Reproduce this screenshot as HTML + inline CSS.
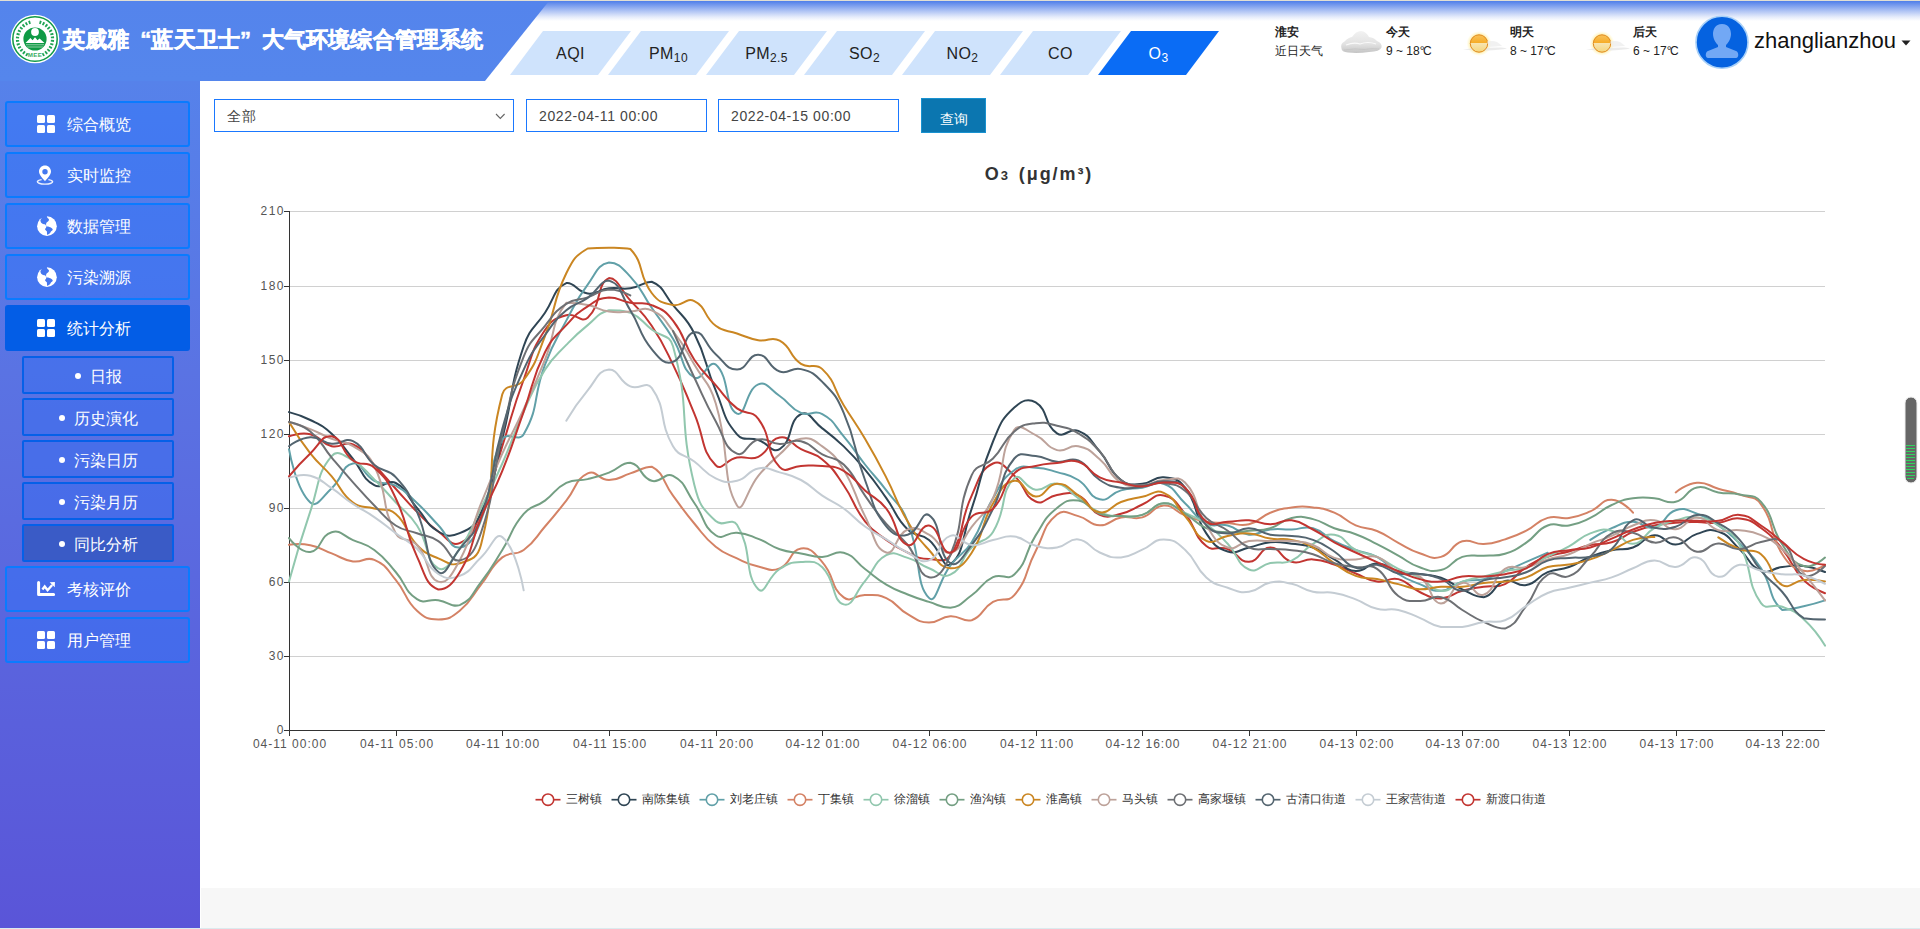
<!DOCTYPE html>
<html><head><meta charset="utf-8">
<style>
*{box-sizing:border-box;margin:0;padding:0}
html,body{width:1920px;height:929px;overflow:hidden;background:#fff;font-family:"Liberation Sans",sans-serif}
.abs{position:absolute}
#topline{left:0;top:0;width:1920px;height:1px;background:#e2dfd3}
#hdrgrad{left:0;top:1px;width:1920px;height:20px;background:linear-gradient(180deg,#4f7ee9 0%,#9db6f2 40%,#e6ecfb 80%,#fff 100%)}
#side{left:0;top:1px;width:200px;height:927px;background:linear-gradient(180deg,#5586ec 0%,#5a73e3 40%,#5a55d8 100%)}
#hdrpoly{left:0;top:1px;width:560px;height:80px}
.q{display:inline-block;width:22px}
#title{-webkit-text-stroke:0.5px #fff;left:63px;top:27px;width:420px;text-align:justify;text-align-last:justify;font-size:22px;font-weight:bold;color:#fff;white-space:nowrap;line-height:26px;letter-spacing:0}
.mi{position:absolute;left:5px;width:185px;height:46px;border:2px solid #0a7bff;border-radius:3px;background:rgba(45,115,250,0.45);color:#fff;font-size:16px;line-height:42px}
.mi span{position:absolute;left:60px;top:1px;width:64px;text-align:justify;text-align-last:justify;white-space:nowrap}
.mi.act{background:#035de6;border-color:#035de6}
.si{position:absolute;left:22px;width:152px;height:38px;border:2px solid #0560e8;border-radius:2px;background:rgba(45,110,245,0.4);color:#fff;font-size:16px;line-height:37px;text-align:center}
.si i{display:inline-block;width:6px;height:6px;border-radius:3px;background:#fff;vertical-align:middle;margin-right:9px;position:relative;top:-2px}
.si.act{background:#3a5bc6}
.jt{display:inline-block;text-align:justify;text-align-last:justify;white-space:nowrap;vertical-align:top}
.ico{position:absolute;left:30px;top:12px;width:18px;height:18px}
#content{left:200px;top:81px;width:1720px;height:847px;background:#fff}
#gray{left:201px;top:888px;width:1719px;height:40px;background:#f7f7f7}
#botline{left:0;top:928px;width:1920px;height:1px;background:#dbeaee}
.tab{position:absolute;top:31px;height:44px;width:121px}
.tabt{position:absolute;top:32px;letter-spacing:0.4px;height:44px;width:121px;text-align:center;line-height:44px;font-size:16px;color:#222}
.tabt sub{font-size:12px;vertical-align:-3px;line-height:0}
.inp{position:absolute;top:99px;height:33px;border:1px solid #1a78ff;background:#fff;font-size:14px;color:#444;line-height:32px;padding-left:12px;letter-spacing:0.6px}
#btn{left:921px;top:98px;width:65px;height:35px;background:#0b76b0;border:1px solid #1992d0;color:#fff;font-size:14px;line-height:40px;text-align:center}
#ctitle{left:902px;top:162px;width:274px;letter-spacing:1.9px;text-align:center;font-size:18px;font-weight:bold;color:#333;line-height:24px}
svg text{font-family:"Liberation Sans",sans-serif}
.wt{position:absolute;font-size:12px;color:#222;line-height:14px;white-space:nowrap}
.wt b{position:relative;top:1px}
.wt b{font-weight:bold}
</style></head><body>
<div class="abs" id="topline"></div>
<div class="abs" id="hdrgrad"></div>
<div class="abs" id="side"></div>
<svg class="abs" id="hdrpoly" width="560" height="80" style="left:0;top:1px">
<defs><linearGradient id="hg" x1="0" y1="0" x2="0" y2="1"><stop offset="0" stop-color="#5484ec"/><stop offset="1" stop-color="#5586ec"/></linearGradient></defs>
<polygon points="0,0 549,0 485,80 0,80" fill="url(#hg)"/>
</svg>
<div class="abs" id="content"></div>
<div class="abs" id="gray"></div>
<div class="abs" id="botline"></div>

<!-- logo -->
<svg class="abs" style="left:10px;top:14px" width="50" height="50" viewBox="0 0 50 50">
<circle cx="25" cy="25" r="24.3" fill="#fff"/>
<circle cx="25" cy="25" r="22.2" fill="none" stroke="#109a46" stroke-width="1.5"/>
<path d="M17.6 40.9 A17.5 17.5 0 0 1 20.5 8.1 M29.5 8.1 A17.5 17.5 0 0 1 32.4 40.9" fill="none" stroke="#1fa454" stroke-width="3.2" stroke-dasharray="1.8 1.6"/>
<circle cx="25" cy="25" r="11.6" fill="#0f9a45"/>
<circle cx="25" cy="18" r="3.9" fill="#fff"/>
<polygon points="15.5,29 20.4,24 22.6,26.3 25,23.3 27.5,26.3 29.6,24.5 34.5,29" fill="#fff"/>
<path d="M16 30.8 H34 M17 33 H33" stroke="#8fd0a6" stroke-width="1.1"/>
<text x="25" y="42.6" font-size="6.2" font-weight="bold" fill="#3aae63" text-anchor="middle" font-family="Liberation Sans" letter-spacing="0.3">MEE</text>
</svg>
<div class="abs" id="title">英威雅<span class="q" style="text-align:right;text-align-last:right">“</span>蓝天卫士<span class="q" style="text-align:left;text-align-last:left">”</span>大气环境综合管理系统</div>

<!-- tabs -->
<svg class="abs" style="left:500px;top:31px" width="740" height="44">
<g fill="#cfe3fc">
<polygon points="10,44 43,0 131,0 98,44"/>
<polygon points="108,44 141,0 229,0 196,44"/>
<polygon points="206,44 239,0 327,0 294,44"/>
<polygon points="304,44 337,0 425,0 392,44"/>
<polygon points="402,44 435,0 523,0 490,44"/>
<polygon points="500,44 533,0 621,0 588,44"/>
</g>
<polygon points="598,44 631,0 719,0 686,44" fill="#0a6cf5"/>
</svg>
<div class="tabt" style="left:510px">AQI</div>
<div class="tabt" style="left:608px">PM<sub>10</sub></div>
<div class="tabt" style="left:706px">PM<sub>2.5</sub></div>
<div class="tabt" style="left:804px">SO<sub>2</sub></div>
<div class="tabt" style="left:902px">NO<sub>2</sub></div>
<div class="tabt" style="left:1000px">CO</div>
<div class="tabt" style="left:1098px;color:#fff">O<sub>3</sub></div>

<!-- weather -->
<div class="wt" style="left:1275px;top:24px"><b><span class="jt" style="width:24px">淮安</span></b></div>
<div class="wt" style="left:1275px;top:44px"><span class="jt" style="width:48px">近日天气</span></div>
<svg class="abs" style="left:1338px;top:28px" width="46" height="28" viewBox="0 0 46 28">
<defs><linearGradient id="cl" x1="0" y1="0" x2="0" y2="1"><stop offset="0" stop-color="#f2f2f2"/><stop offset="0.6" stop-color="#e2e2e2"/><stop offset="1" stop-color="#c4c4c4"/></linearGradient></defs>
<path d="M3.5 20.5 Q2 15.5 6.5 13.5 Q10 9.5 14 9 Q18 3 23 3 Q28 3.5 31 9 Q36 9.5 39 13 Q44.5 15 43.5 19.5 Q42 23.5 31 24 Q20 25.5 10 24.5 Q3.5 24 3.5 20.5Z" fill="url(#cl)"/><path d="M8 17 Q16 14 22 16 Q30 13 38 16" stroke="#fff" stroke-width="1.2" fill="none" opacity="0.8"/><path d="M6 22 Q18 20 26 21.5 Q34 20 41 21" stroke="#c0c0c0" stroke-width="1" fill="none" opacity="0.6"/>
</svg>
<div class="wt" style="left:1386px;top:24px"><b><span class="jt" style="width:24px">今天</span></b></div>
<div class="wt" style="left:1386px;top:44px">9 ~ 18<span style="letter-spacing:-1.5px">°</span>C</div>
<svg class="abs" style="left:1455px;top:25px" width="56" height="36" viewBox="0 0 56 36"><defs><radialGradient id="glow"><stop offset="0.6" stop-color="#ffd84a" stop-opacity="0.7"/><stop offset="1" stop-color="#fff3a0" stop-opacity="0"/></radialGradient><linearGradient id="sunf" x1="0" y1="0" x2="0" y2="1"><stop offset="0" stop-color="#f9c25a"/><stop offset="0.45" stop-color="#f6ad2a"/><stop offset="0.5" stop-color="#f7e4b0"/><stop offset="1" stop-color="#f5d67a"/></linearGradient></defs><circle cx="24" cy="18.5" r="12.5" fill="url(#glow)"/><path d="M8 24.5 Q14 23.5 20 23 L46 22.5 Q51 23 52 23.8 Q44 25 34 25.5 Q22 26 8 24.5Z" fill="#e6e6e6" opacity="0.8"/><circle cx="24" cy="18.5" r="8.7" fill="url(#sunf)" stroke="#e08a20" stroke-width="1"/><path d="M32 16.5 Q38 15.5 42 17 Q45 19 47 21 L34 22Z" fill="#eeeeee" opacity="0.8"/></svg>
<div class="wt" style="left:1510px;top:24px"><b><span class="jt" style="width:24px">明天</span></b></div>
<div class="wt" style="left:1510px;top:44px">8 ~ 17<span style="letter-spacing:-1.5px">°</span>C</div>
<svg class="abs" style="left:1578px;top:25px" width="56" height="36" viewBox="0 0 56 36"><circle cx="24" cy="18.5" r="12.5" fill="url(#glow)"/><path d="M8 24.5 Q14 23.5 20 23 L46 22.5 Q51 23 52 23.8 Q44 25 34 25.5 Q22 26 8 24.5Z" fill="#e6e6e6" opacity="0.8"/><circle cx="24" cy="18.5" r="8.7" fill="url(#sunf)" stroke="#e08a20" stroke-width="1"/><path d="M32 16.5 Q38 15.5 42 17 Q45 19 47 21 L34 22Z" fill="#eeeeee" opacity="0.8"/></svg>
<div class="wt" style="left:1633px;top:24px"><b><span class="jt" style="width:24px">后天</span></b></div>
<div class="wt" style="left:1633px;top:44px">6 ~ 17<span style="letter-spacing:-1.5px">°</span>C</div>

<!-- avatar -->
<svg class="abs" style="left:1694px;top:15px" width="56" height="56" viewBox="0 0 56 56">
<circle cx="28" cy="27.3" r="26" fill="#0562e0" stroke="#a8d0f8" stroke-width="1.6"/>
<path d="M28 9 C21 9 19 15 19 19 C19 24 22 28 24 30 L24 32 L14 36 C11 37 11 43 14 43 L42 43 C45 43 45 37 42 36 L32 32 L32 30 C34 28 37 24 37 19 C37 15 35 9 28 9Z" fill="#72a8f5"/>
</svg>
<div class="abs" style="left:1754px;top:28px;font-size:22px;color:#111;line-height:26px">zhanglianzhou</div>
<svg class="abs" style="left:1901px;top:40px" width="10" height="6"><polygon points="0.5,0.5 9.5,0.5 5,5.5" fill="#222"/></svg>

<!-- sidebar menu -->
<div class="mi" style="top:101px"><svg class="ico" viewBox="0 0 18 18"><rect x="0" y="0" width="8" height="8" rx="1.5" fill="#fff"/><rect x="10" y="0" width="8" height="8" rx="1.5" fill="#fff"/><rect x="0" y="10" width="8" height="8" rx="1.5" fill="#fff"/><rect x="10" y="10" width="8" height="8" rx="1.5" fill="#fff"/></svg><span>综合概览</span></div>
<div class="mi" style="top:152px"><svg class="ico" viewBox="0 0 18 18" style="overflow:visible"><path d="M8 -0.5 C4.6 -0.5 2 2.2 2 5.6 C2 9.2 5.6 12.3 8 15.2 C10.4 12.3 14 9.2 14 5.6 C14 2.2 11.4 -0.5 8 -0.5Z M8 3.1 A2.7 2.7 0 1 0 8 8.5 A2.7 2.7 0 1 0 8 3.1Z" fill="#fff" fill-rule="evenodd"/><path d="M4.6 13.6 A7.6 2.4 0 1 0 11.4 13.6" fill="none" stroke="#fff" stroke-width="1.4" opacity="0.9"/></svg><span>实时监控</span></div>
<div class="mi" style="top:203px"><svg class="ico" style="left:30px;top:11px;width:20px;height:20px" viewBox="0 0 20 20"><defs><mask id="gm" maskUnits="userSpaceOnUse" x="-2" y="-2" width="24" height="24"><rect x="-2" y="-2" width="24" height="24" fill="#fff"/><path fill="#000" d="M4.53 2.17 C3.6 3.2 3.3 4.1 3.48 4.73 C3.6 5.8 3.9 6.5 4.23 6.84 C4.9 7.5 5.4 7.8 6.04 7.9 C6.8 8 7.4 8.1 7.84 8.35 C8.4 8.7 8.7 9.2 8.9 9.55 L9.35 10.16 L9.05 8.65 C9.1 7.6 9.3 7 9.65 6.54 C10.3 5.8 11 5.5 11.46 5.04 C11.9 4.5 12 3.8 11.9 3.23 C11.6 2.6 11 2.3 10.55 2.02 L9.95 0.82 L10 -2 L2 -2 Z M9.35 10.16 C10 10.3 10.6 10.3 11.16 10.46 C12 10.7 12.7 11 13.27 11.36 C14.3 12 15 12.4 15.37 12.87 C15.7 13.3 15.8 13.7 15.67 14.07 C15.3 14.6 14.6 14.9 14.17 15.28 C13.8 15.7 13.5 16.3 13.27 16.78 C12.6 17.5 12 18 11.46 18.29 L10.25 18.89 C10 18.2 10 17.6 9.95 17.08 L9.95 15.58 C9.5 14.9 8.9 14.5 8.45 14.07 C8.1 13.6 8.1 13.2 8.14 12.87 C8.5 12.4 8.8 12 9.05 11.66 Z"/></mask></defs><circle cx="9.95" cy="10.15" r="9.85" fill="#fff" mask="url(#gm)"/></svg><span>数据管理</span></div>
<div class="mi" style="top:254px"><svg class="ico" style="left:30px;top:11px;width:20px;height:20px" viewBox="0 0 20 20"><circle cx="9.95" cy="10.15" r="9.85" fill="#fff" mask="url(#gm)"/></svg><span>污染溯源</span></div>
<div class="mi act" style="top:305px"><svg class="ico" viewBox="0 0 18 18"><rect x="0" y="0" width="8" height="8" rx="1.5" fill="#fff"/><rect x="10" y="0" width="8" height="8" rx="1.5" fill="#fff"/><rect x="0" y="10" width="8" height="8" rx="1.5" fill="#fff"/><rect x="10" y="10" width="8" height="8" rx="1.5" fill="#fff"/></svg><span>统计分析</span></div>
<div class="si" style="top:356px"><i></i><span class="jt" style="width:32px">日报</span></div>
<div class="si" style="top:398px"><i></i><span class="jt" style="width:64px">历史演化</span></div>
<div class="si" style="top:440px"><i></i><span class="jt" style="width:64px">污染日历</span></div>
<div class="si" style="top:482px"><i></i><span class="jt" style="width:64px">污染月历</span></div>
<div class="si act" style="top:524px"><i></i><span class="jt" style="width:64px">同比分析</span></div>
<div class="mi" style="top:566px"><svg class="ico" viewBox="0 0 18 18" style="overflow:visible"><path d="M1.6 2.6 V14.6 H16.6" stroke="#fff" stroke-width="3" fill="none" stroke-linecap="round" stroke-linejoin="round"/><path d="M5.4 9.4 L7.7 6.4 L10.6 10.2 L15.2 5" stroke="#fff" stroke-width="2.4" fill="none" stroke-linejoin="miter"/><path d="M12.6 2.2 L17.9 2.1 L17.8 7.3Z" fill="#fff"/></svg><span>考核评价</span></div>
<div class="mi" style="top:617px"><svg class="ico" viewBox="0 0 18 18"><rect x="0" y="0" width="8" height="8" rx="1.5" fill="#fff"/><rect x="10" y="0" width="8" height="8" rx="1.5" fill="#fff"/><rect x="0" y="10" width="8" height="8" rx="1.5" fill="#fff"/><rect x="10" y="10" width="8" height="8" rx="1.5" fill="#fff"/></svg><span>用户管理</span></div>

<!-- filter -->
<div class="inp" style="left:214px;width:300px"><span class="jt" style="width:28px">全部</span><svg style="position:absolute;right:7px;top:13px" width="11" height="7"><polyline points="1,1 5.3,5.5 9.6,1" fill="none" stroke="#666" stroke-width="1.1"/></svg></div>
<div class="inp" style="left:526px;width:181px">2022-04-11 00:00</div>
<div class="inp" style="left:718px;width:181px">2022-04-15 00:00</div>
<div class="abs" id="btn"><span class="jt" style="width:28px">查询</span></div>
<div class="abs" id="ctitle">O<span style="font-size:13px">3</span><span style="margin-left:9px">(</span>μg/m³)</div>

<svg width="1920" height="929" style="position:absolute;left:0;top:0">
<line x1="289" x2="1825" y1="211.5" y2="211.5" stroke="#d0d0d0" stroke-width="1"/>
<line x1="289" x2="1825" y1="286.5" y2="286.5" stroke="#d0d0d0" stroke-width="1"/>
<line x1="289" x2="1825" y1="360.5" y2="360.5" stroke="#d0d0d0" stroke-width="1"/>
<line x1="289" x2="1825" y1="434.5" y2="434.5" stroke="#d0d0d0" stroke-width="1"/>
<line x1="289" x2="1825" y1="508.5" y2="508.5" stroke="#d0d0d0" stroke-width="1"/>
<line x1="289" x2="1825" y1="582.5" y2="582.5" stroke="#d0d0d0" stroke-width="1"/>
<line x1="289" x2="1825" y1="656.5" y2="656.5" stroke="#d0d0d0" stroke-width="1"/>
<line x1="289.5" x2="289.5" y1="211" y2="731" stroke="#333" stroke-width="1"/>
<line x1="284" x2="289" y1="730.5" y2="730.5" stroke="#333"/>
<text x="285" y="733.5" text-anchor="end" font-size="12" fill="#555" letter-spacing="1.5">0</text>
<line x1="284" x2="289" y1="656.5" y2="656.5" stroke="#333"/>
<text x="285" y="659.5" text-anchor="end" font-size="12" fill="#555" letter-spacing="1.5">30</text>
<line x1="284" x2="289" y1="582.5" y2="582.5" stroke="#333"/>
<text x="285" y="585.5" text-anchor="end" font-size="12" fill="#555" letter-spacing="1.5">60</text>
<line x1="284" x2="289" y1="508.5" y2="508.5" stroke="#333"/>
<text x="285" y="511.5" text-anchor="end" font-size="12" fill="#555" letter-spacing="1.5">90</text>
<line x1="284" x2="289" y1="434.5" y2="434.5" stroke="#333"/>
<text x="285" y="437.5" text-anchor="end" font-size="12" fill="#555" letter-spacing="1.5">120</text>
<line x1="284" x2="289" y1="360.5" y2="360.5" stroke="#333"/>
<text x="285" y="363.5" text-anchor="end" font-size="12" fill="#555" letter-spacing="1.5">150</text>
<line x1="284" x2="289" y1="286.5" y2="286.5" stroke="#333"/>
<text x="285" y="289.5" text-anchor="end" font-size="12" fill="#555" letter-spacing="1.5">180</text>
<line x1="284" x2="289" y1="211.5" y2="211.5" stroke="#333"/>
<text x="285" y="214.5" text-anchor="end" font-size="12" fill="#555" letter-spacing="1.5">210</text>
<line x1="284" x2="1825" y1="730.5" y2="730.5" stroke="#333" stroke-width="1"/>
<line x1="289.5" x2="289.5" y1="731" y2="736" stroke="#333"/>
<text x="290.0" y="748" text-anchor="middle" font-size="12" fill="#555" letter-spacing="1">04-11 00:00</text>
<line x1="396.5" x2="396.5" y1="731" y2="736" stroke="#333"/>
<text x="397.0" y="748" text-anchor="middle" font-size="12" fill="#555" letter-spacing="1">04-11 05:00</text>
<line x1="502.5" x2="502.5" y1="731" y2="736" stroke="#333"/>
<text x="503.0" y="748" text-anchor="middle" font-size="12" fill="#555" letter-spacing="1">04-11 10:00</text>
<line x1="609.5" x2="609.5" y1="731" y2="736" stroke="#333"/>
<text x="610.0" y="748" text-anchor="middle" font-size="12" fill="#555" letter-spacing="1">04-11 15:00</text>
<line x1="716.5" x2="716.5" y1="731" y2="736" stroke="#333"/>
<text x="717.0" y="748" text-anchor="middle" font-size="12" fill="#555" letter-spacing="1">04-11 20:00</text>
<line x1="822.5" x2="822.5" y1="731" y2="736" stroke="#333"/>
<text x="823.0" y="748" text-anchor="middle" font-size="12" fill="#555" letter-spacing="1">04-12 01:00</text>
<line x1="929.5" x2="929.5" y1="731" y2="736" stroke="#333"/>
<text x="930.0" y="748" text-anchor="middle" font-size="12" fill="#555" letter-spacing="1">04-12 06:00</text>
<line x1="1036.5" x2="1036.5" y1="731" y2="736" stroke="#333"/>
<text x="1037.0" y="748" text-anchor="middle" font-size="12" fill="#555" letter-spacing="1">04-12 11:00</text>
<line x1="1142.5" x2="1142.5" y1="731" y2="736" stroke="#333"/>
<text x="1143.0" y="748" text-anchor="middle" font-size="12" fill="#555" letter-spacing="1">04-12 16:00</text>
<line x1="1249.5" x2="1249.5" y1="731" y2="736" stroke="#333"/>
<text x="1250.0" y="748" text-anchor="middle" font-size="12" fill="#555" letter-spacing="1">04-12 21:00</text>
<line x1="1356.5" x2="1356.5" y1="731" y2="736" stroke="#333"/>
<text x="1357.0" y="748" text-anchor="middle" font-size="12" fill="#555" letter-spacing="1">04-13 02:00</text>
<line x1="1462.5" x2="1462.5" y1="731" y2="736" stroke="#333"/>
<text x="1463.0" y="748" text-anchor="middle" font-size="12" fill="#555" letter-spacing="1">04-13 07:00</text>
<line x1="1569.5" x2="1569.5" y1="731" y2="736" stroke="#333"/>
<text x="1570.0" y="748" text-anchor="middle" font-size="12" fill="#555" letter-spacing="1">04-13 12:00</text>
<line x1="1676.5" x2="1676.5" y1="731" y2="736" stroke="#333"/>
<text x="1677.0" y="748" text-anchor="middle" font-size="12" fill="#555" letter-spacing="1">04-13 17:00</text>
<line x1="1782.5" x2="1782.5" y1="731" y2="736" stroke="#333"/>
<text x="1783.0" y="748" text-anchor="middle" font-size="12" fill="#555" letter-spacing="1">04-13 22:00</text>
<g fill="none" stroke-width="2" stroke-linejoin="round" stroke-linecap="round">
<path d="M289.0 436.3 C289.0 436.3 300.4 432.0 310.3 434.3 C321.7 437.0 320.3 443.5 331.7 446.2 C341.6 448.6 344.0 440.5 353.0 444.5 C365.4 449.9 364.1 454.3 374.3 465.0 C385.4 476.4 384.9 476.9 395.7 488.7 C406.3 500.4 405.9 500.8 417.0 511.9 C427.2 522.2 426.7 523.0 438.3 531.5 C448.1 538.6 451.2 546.7 459.7 543.1 C472.5 537.5 473.6 529.6 481.0 512.9 C495.0 481.2 491.7 479.5 502.3 446.2 C513.0 412.8 511.6 412.3 523.7 379.5 C532.9 354.2 530.6 351.7 545.0 330.0 C551.9 319.6 554.7 318.6 566.3 315.2 C576.0 312.4 580.8 323.7 587.7 317.7 C602.1 305.1 596.3 283.3 609.0 278.1 C617.7 278.1 620.1 288.9 630.3 300.4 C641.4 312.7 642.5 312.1 651.7 325.8 C663.9 344.2 663.3 344.7 673.0 364.6 C684.7 388.6 683.9 389.0 694.3 413.6 C705.2 439.3 700.5 449.6 715.7 465.2 C721.8 471.6 726.0 459.7 737.0 457.6 C747.3 455.5 749.2 461.1 758.3 456.8 C770.6 451.1 768.1 439.6 779.7 437.5 C789.4 435.8 790.2 443.6 801.0 449.2 C811.5 454.6 813.5 452.0 822.3 459.5 C834.8 470.1 834.2 471.5 843.7 485.2 C855.5 502.4 852.3 505.0 865.0 521.3 C873.6 532.3 875.0 531.5 886.3 539.9 C896.3 547.2 896.4 547.6 907.7 552.7 C917.7 557.3 918.2 558.5 929.0 559.1 C939.5 559.7 944.9 563.3 950.3 555.2 C966.2 531.5 958.4 524.1 971.7 495.6 C979.7 478.3 980.0 469.5 993.0 463.5 C1001.3 459.6 1005.3 467.8 1014.3 475.8 C1026.6 486.8 1022.9 495.8 1035.7 501.5 C1044.2 505.4 1046.1 496.5 1057.0 494.9 C1067.4 493.4 1069.3 491.1 1078.3 495.4 C1090.6 501.1 1087.4 509.6 1099.7 514.9 C1108.7 518.8 1110.8 516.1 1121.0 513.7 C1132.1 511.0 1131.7 509.1 1142.3 504.5 C1153.0 499.9 1154.0 493.3 1163.7 495.4 C1175.3 497.9 1176.0 503.0 1185.0 513.7 C1197.4 528.3 1192.6 534.7 1206.3 546.0 C1214.0 552.3 1217.8 545.3 1227.7 549.0 C1239.1 553.2 1238.5 562.2 1249.0 561.8 C1259.8 561.5 1259.7 547.5 1270.3 547.5 C1281.0 547.5 1280.0 558.6 1291.7 561.8 C1301.4 564.5 1302.5 558.7 1313.0 559.4 C1323.8 560.1 1323.9 561.1 1334.3 564.6 C1345.3 568.2 1344.9 569.2 1355.7 573.5 C1366.3 577.7 1366.0 580.2 1377.0 581.6 C1387.3 583.0 1388.5 576.7 1398.3 579.1 C1409.8 581.9 1408.4 586.9 1419.7 592.0 C1429.7 596.6 1430.4 598.4 1441.0 598.4 C1451.8 598.1 1451.4 593.7 1462.3 590.8 C1472.8 587.9 1473.0 588.5 1483.7 586.8 C1494.3 585.1 1495.6 588.4 1505.0 584.1 C1516.9 578.6 1514.9 574.4 1526.3 567.0 C1536.3 560.7 1536.6 560.7 1547.7 556.7 C1557.9 552.9 1558.4 554.4 1569.0 551.5 C1579.7 548.5 1579.5 547.4 1590.3 545.0 C1600.8 542.8 1601.5 545.4 1611.7 542.3 C1622.9 538.9 1622.0 536.3 1633.0 531.9 C1643.3 527.9 1643.5 527.8 1654.3 525.5 C1664.8 523.3 1665.0 523.7 1675.7 522.8 C1686.3 521.9 1686.3 522.1 1697.0 522.1 C1707.7 522.1 1707.8 523.7 1718.3 522.8 C1729.1 521.9 1729.4 517.1 1739.7 518.4 C1750.7 519.7 1751.7 521.2 1761.0 528.0 C1773.0 536.7 1772.8 537.6 1782.3 549.2 C1794.2 563.7 1790.9 566.9 1803.7 580.1 C1812.2 588.9 1825.0 593.2 1825.0 593.2" stroke="#c23531" />
<path d="M289.0 412.1 C289.0 412.1 300.3 414.9 310.3 420.0 C321.6 425.7 322.4 425.3 331.7 433.8 C343.7 444.9 342.5 446.3 353.0 459.0 C363.8 472.0 361.3 477.9 374.3 485.2 C382.6 489.9 387.2 478.5 395.7 483.0 C408.6 489.9 406.1 495.7 417.0 508.0 C427.5 519.9 425.6 523.9 438.3 531.5 C446.9 536.5 450.7 537.1 459.7 533.2 C472.0 527.8 475.1 525.9 481.0 512.9 C496.4 478.7 492.8 476.1 502.3 438.8 C514.1 392.8 508.6 390.7 523.7 346.3 C530.0 327.7 533.9 329.2 545.0 312.7 C555.2 297.6 553.4 288.9 566.3 283.1 C574.7 281.8 576.6 292.1 587.7 293.5 C597.9 294.7 598.2 289.6 609.0 288.3 C619.5 287.0 619.9 289.8 630.3 288.3 C641.2 286.6 642.8 281.8 651.7 281.8 C664.2 286.8 663.0 292.9 673.0 305.1 C684.3 318.7 686.5 317.7 694.3 333.5 C707.8 360.4 703.8 362.4 715.7 390.3 C725.2 412.8 722.3 417.2 737.0 434.3 C743.6 442.0 747.9 436.4 758.3 440.0 C769.3 443.8 772.0 453.8 779.7 449.2 C793.3 440.9 787.9 420.4 801.0 414.1 C809.2 410.1 812.1 420.6 822.3 428.4 C833.4 436.8 833.6 436.7 843.7 446.4 C855.0 457.4 855.0 457.5 865.0 469.7 C876.3 483.3 876.0 483.6 886.3 498.1 C897.4 513.5 894.5 516.6 907.7 529.5 C915.9 537.5 920.0 532.5 929.0 539.9 C941.3 549.9 942.8 569.8 950.3 564.3 C964.1 554.2 961.9 536.8 971.7 508.7 C983.2 475.4 979.4 473.7 993.0 441.5 C1000.7 423.2 1000.6 420.2 1014.3 407.6 C1021.9 400.7 1027.8 397.7 1035.7 402.4 C1049.1 410.6 1043.4 424.3 1057.0 433.3 C1064.8 438.5 1069.4 427.1 1078.3 430.9 C1090.7 436.1 1090.0 440.2 1099.7 451.4 C1111.3 464.8 1107.7 470.0 1121.0 480.0 C1129.0 486.2 1131.8 484.4 1142.3 483.8 C1153.2 483.1 1153.3 476.4 1163.7 477.3 C1174.7 478.3 1178.2 478.7 1185.0 487.7 C1199.5 506.8 1192.6 512.9 1206.3 533.4 C1213.9 544.8 1215.7 547.5 1227.7 551.5 C1237.0 554.5 1238.4 549.8 1249.0 547.5 C1259.7 545.2 1259.5 543.3 1270.3 542.3 C1280.9 541.4 1281.1 542.5 1291.7 543.8 C1302.4 545.1 1303.0 543.9 1313.0 547.5 C1324.3 551.6 1323.6 553.5 1334.3 559.4 C1345.0 565.2 1344.6 569.9 1355.7 571.0 C1365.9 572.0 1366.4 563.5 1377.0 563.6 C1387.7 563.6 1387.4 568.6 1398.3 571.2 C1408.7 573.8 1409.0 572.4 1419.7 574.0 C1430.4 575.6 1430.9 574.1 1441.0 577.7 C1452.3 581.7 1451.3 584.2 1462.3 589.3 C1472.7 594.0 1473.9 597.2 1483.7 597.2 C1495.2 594.9 1493.2 584.2 1505.0 580.9 C1514.5 578.2 1516.4 587.1 1526.3 585.1 C1537.7 582.8 1536.3 577.0 1547.7 572.2 C1557.7 568.0 1558.7 570.8 1569.0 567.0 C1580.1 563.0 1579.3 561.0 1590.3 556.7 C1600.7 552.6 1600.8 552.6 1611.7 550.2 C1622.1 548.0 1623.1 551.0 1633.0 547.5 C1644.4 543.5 1643.4 535.9 1654.3 535.2 C1664.7 534.4 1665.1 544.9 1675.7 544.5 C1686.5 544.2 1685.8 537.4 1697.0 533.9 C1707.1 530.8 1709.0 528.1 1718.3 531.5 C1730.4 535.8 1729.5 539.8 1739.7 549.2 C1750.8 559.5 1748.6 565.6 1761.0 570.7 C1769.9 574.5 1771.6 568.2 1782.3 567.0 C1792.9 565.9 1793.2 564.8 1803.7 566.0 C1814.5 567.3 1825.0 572.0 1825.0 572.0" stroke="#2f4554" />
<path d="M289.0 449.2 C289.0 449.2 295.6 489.0 310.3 502.5 C316.9 508.6 322.3 496.8 331.7 488.2 C343.6 477.3 341.4 465.5 353.0 463.5 C362.7 461.8 362.5 474.6 374.3 480.8 C383.8 485.7 386.2 480.8 395.7 485.7 C407.5 491.9 406.9 493.7 417.0 503.0 C428.3 513.5 427.7 514.1 438.3 525.3 C449.0 536.4 449.6 548.7 459.7 547.5 C470.9 546.2 474.8 536.1 481.0 520.3 C496.1 482.1 485.4 473.6 502.3 439.5 C506.8 430.6 518.7 443.0 523.7 434.3 C540.1 405.5 532.2 398.7 545.0 364.6 C553.6 341.8 554.8 342.2 566.3 320.6 C576.2 302.2 575.3 301.3 587.7 284.6 C596.7 272.3 597.4 264.7 609.0 262.6 C618.7 262.6 621.7 267.5 630.3 276.6 C643.1 290.1 641.0 292.2 651.7 307.8 C662.3 323.3 663.2 322.7 673.0 338.7 C684.5 357.5 680.7 369.2 694.3 377.5 C702.0 382.2 708.9 358.9 715.7 364.6 C730.2 376.9 724.3 407.7 737.0 413.6 C745.6 417.6 745.6 389.6 758.3 384.4 C766.9 380.9 769.6 389.3 779.7 396.0 C790.9 403.5 789.1 407.8 801.0 412.8 C810.4 416.8 813.6 409.3 822.3 414.1 C834.9 421.0 833.7 424.6 843.7 436.3 C855.1 449.8 854.1 450.6 865.0 464.5 C875.4 477.7 876.3 477.0 886.3 490.4 C897.6 505.5 900.8 504.2 907.7 521.6 C922.1 558.0 914.7 583.2 929.0 597.9 C936.0 605.2 938.6 580.9 950.3 565.6 C959.9 553.1 963.3 555.5 971.7 542.3 C984.6 521.9 980.6 519.3 993.0 498.3 C1002.0 483.2 1001.1 479.7 1014.3 470.2 C1022.4 464.4 1025.1 467.2 1035.7 467.7 C1046.4 468.2 1046.6 469.1 1057.0 472.1 C1067.9 475.3 1068.9 474.0 1078.3 480.0 C1090.2 487.6 1087.8 496.4 1099.7 499.3 C1109.2 501.6 1109.9 493.4 1121.0 490.4 C1131.3 487.6 1131.7 489.4 1142.3 487.7 C1153.0 486.0 1154.5 480.4 1163.7 483.8 C1175.9 488.2 1174.4 493.4 1185.0 503.3 C1195.8 513.3 1194.0 517.1 1206.3 523.5 C1215.3 528.2 1217.4 522.8 1227.7 525.5 C1238.8 528.4 1238.0 533.6 1249.0 534.7 C1259.4 535.6 1259.5 530.8 1270.3 529.5 C1280.8 528.2 1281.0 529.8 1291.7 529.5 C1302.3 529.2 1303.1 525.6 1313.0 528.2 C1324.5 531.4 1323.3 535.4 1334.3 541.1 C1344.6 546.3 1344.8 546.0 1355.7 550.0 C1366.2 553.9 1367.4 551.5 1377.0 556.9 C1388.7 563.5 1386.9 566.7 1398.3 574.0 C1408.2 580.3 1408.7 579.8 1419.7 584.1 C1430.0 588.2 1430.5 591.4 1441.0 590.8 C1451.9 590.1 1451.3 584.6 1462.3 581.6 C1472.6 578.8 1473.3 581.7 1483.7 579.1 C1494.6 576.5 1494.5 575.5 1505.0 571.2 C1515.8 566.9 1515.6 566.5 1526.3 561.8 C1537.0 557.2 1547.7 552.7 1547.7 552.7 M1590.3 539.9 C1590.3 539.9 1600.5 532.9 1611.7 528.2 C1621.9 523.9 1622.3 521.9 1633.0 521.8 C1643.6 521.7 1644.8 530.3 1654.3 527.7 C1666.2 524.5 1663.7 514.1 1675.7 510.2 C1685.0 507.1 1687.0 510.1 1697.0 513.7 C1708.3 517.7 1708.4 518.5 1718.3 525.5 C1729.7 533.5 1729.8 533.7 1739.7 543.6 C1751.2 555.1 1752.2 554.6 1761.0 568.3 C1773.6 587.9 1767.7 597.0 1782.3 610.0 C1789.1 610.0 1793.1 608.7 1803.7 606.3 C1814.5 603.9 1825.0 600.4 1825.0 600.4" stroke="#61a0a8" />
<path d="M289.0 544.8 C289.0 544.8 300.0 543.2 310.3 545.3 C321.4 547.5 321.0 549.4 331.7 553.4 C342.3 557.5 342.0 559.7 353.0 561.4 C363.3 562.9 365.3 556.0 374.3 559.9 C386.7 565.2 386.3 568.7 395.7 579.9 C407.7 594.2 403.8 598.5 417.0 610.8 C425.1 618.3 427.7 619.4 438.3 619.4 C449.0 619.4 451.0 617.8 459.7 610.8 C472.4 600.4 470.5 597.8 481.0 584.6 C491.8 571.1 489.4 567.9 502.3 557.4 C510.8 550.6 514.8 556.4 523.7 550.0 C536.1 541.0 534.6 538.5 545.0 526.5 C556.0 513.8 555.8 513.7 566.3 500.6 C577.2 487.1 574.7 479.6 587.7 473.4 C596.0 469.3 598.3 480.0 609.0 480.0 C619.7 480.0 619.7 476.7 630.3 473.4 C641.0 470.0 643.5 466.7 651.7 466.7 C664.8 473.6 662.2 481.2 673.0 495.6 C683.5 509.7 683.1 510.1 694.3 523.5 C704.4 535.6 703.6 536.9 715.7 546.8 C724.9 554.4 726.0 553.3 737.0 558.4 C747.3 563.2 747.3 564.0 758.3 566.5 C768.7 568.9 770.6 572.1 779.7 568.3 C792.0 563.1 789.6 550.2 801.0 548.5 C810.9 547.1 814.2 552.8 822.3 562.1 C835.6 577.3 829.6 586.6 843.7 597.4 C851.0 603.1 854.4 594.8 865.0 595.0 C875.7 595.2 876.8 593.9 886.3 598.2 C898.1 603.5 896.2 607.7 907.7 614.2 C917.5 619.9 918.2 622.1 929.0 622.6 C939.5 622.6 939.5 616.8 950.3 616.2 C960.9 615.6 962.4 622.6 971.7 620.2 C983.7 616.1 981.1 608.8 993.0 601.9 C1002.5 596.4 1007.7 603.2 1014.3 595.2 C1029.0 577.7 1024.2 572.7 1035.7 551.0 C1045.5 532.3 1042.8 526.0 1057.0 514.4 C1064.2 508.5 1068.1 513.5 1078.3 516.1 C1089.4 519.0 1088.9 525.0 1099.7 525.3 C1110.2 525.6 1110.0 519.4 1121.0 517.4 C1131.3 515.4 1132.4 520.1 1142.3 517.4 C1153.7 514.2 1152.8 506.0 1163.7 505.5 C1174.1 505.0 1174.0 511.2 1185.0 515.4 C1195.4 519.4 1195.4 519.9 1206.3 521.8 C1216.8 523.7 1217.0 522.4 1227.7 523.0 C1238.3 523.7 1239.0 526.7 1249.0 524.3 C1260.3 521.5 1259.1 517.1 1270.3 512.7 C1280.5 508.7 1280.8 508.8 1291.7 507.5 C1302.2 506.2 1302.5 506.2 1313.0 507.5 C1323.8 508.8 1324.3 508.5 1334.3 512.7 C1345.6 517.4 1344.4 520.4 1355.7 525.3 C1365.7 529.6 1366.9 526.8 1377.0 531.0 C1388.2 535.6 1387.5 537.2 1398.3 542.8 C1408.8 548.3 1408.5 549.5 1419.7 553.2 C1429.8 556.6 1431.4 559.6 1441.0 556.9 C1452.7 553.6 1450.6 544.9 1462.3 541.3 C1471.9 538.5 1473.1 544.5 1483.7 544.1 C1494.4 543.6 1494.6 542.6 1505.0 539.4 C1515.9 535.9 1516.1 535.9 1526.3 530.7 C1537.4 525.1 1536.2 521.3 1547.7 517.9 C1557.5 514.9 1558.6 519.4 1569.0 517.9 C1579.9 516.2 1580.1 515.7 1590.3 511.4 C1601.5 506.7 1601.1 499.5 1611.7 499.8 C1622.5 500.1 1633.0 512.7 1633.0 512.7 M1675.7 492.4 C1675.7 492.4 1686.0 483.7 1697.0 482.8 C1707.4 481.9 1707.7 485.7 1718.3 488.7 C1729.0 491.7 1729.3 490.8 1739.7 494.6 C1750.6 498.6 1754.6 495.3 1761.0 504.3 C1775.9 525.1 1768.1 532.0 1782.3 554.2 C1789.4 565.2 1791.9 567.8 1803.7 570.7 C1813.3 573.1 1825.0 564.8 1825.0 564.8" stroke="#d48265" />
<path d="M289.0 581.6 C289.0 581.6 298.5 546.1 310.3 511.4 C319.9 483.4 316.1 474.7 331.7 456.1 C337.4 449.2 343.8 455.4 353.0 460.5 C365.1 467.2 364.1 469.6 374.3 479.5 C385.5 490.4 385.1 490.9 395.7 502.3 C406.4 513.8 408.5 512.4 417.0 525.5 C429.9 545.4 425.0 561.0 438.3 568.3 C446.4 572.7 451.4 560.4 459.7 548.8 C472.8 530.2 470.7 528.5 481.0 508.0 C492.0 485.9 492.4 486.0 502.3 463.5 C513.7 437.8 512.1 437.1 523.7 411.6 C533.4 390.2 532.4 389.3 545.0 369.6 C553.7 355.9 555.1 356.6 566.3 344.9 C576.4 334.4 576.4 334.2 587.7 325.1 C597.7 316.9 597.3 313.6 609.0 310.3 C618.7 310.3 620.9 310.3 630.3 312.7 C642.2 318.1 641.0 321.1 651.7 329.5 C662.3 337.9 669.5 333.7 673.0 346.3 C690.9 411.3 677.9 417.6 694.3 484.7 C699.3 504.9 701.6 507.8 715.7 521.1 C722.9 527.9 731.8 516.5 737.0 524.8 C753.2 550.6 743.4 573.8 758.3 589.3 C764.8 596.0 767.6 576.7 779.7 569.0 C788.9 563.1 790.2 562.5 801.0 562.1 C811.6 561.7 815.1 560.1 822.3 567.3 C836.4 581.2 831.4 600.4 843.7 604.4 C852.7 607.3 854.7 593.0 865.0 581.1 C876.0 568.4 873.3 562.3 886.3 555.2 C894.7 550.6 897.5 554.8 907.7 557.9 C918.9 561.3 918.0 563.9 929.0 568.3 C939.3 572.3 942.0 578.8 950.3 574.7 C963.3 568.4 959.6 559.6 971.7 547.5 C980.9 538.3 986.3 542.8 993.0 531.9 C1007.7 508.1 999.3 493.0 1014.3 478.1 C1020.6 471.8 1024.5 488.2 1035.7 489.7 C1045.8 491.0 1047.1 481.8 1057.0 483.8 C1068.5 486.0 1067.6 491.0 1078.3 498.1 C1089.0 505.2 1088.1 507.3 1099.7 512.2 C1109.5 516.3 1110.3 515.4 1121.0 516.1 C1131.6 516.8 1132.3 517.9 1142.3 514.9 C1153.7 511.5 1152.8 503.8 1163.7 503.3 C1174.1 502.8 1174.5 507.8 1185.0 512.9 C1195.8 518.2 1196.7 517.0 1206.3 524.0 C1218.0 532.5 1217.7 533.2 1227.7 543.8 C1239.1 556.0 1236.2 563.7 1249.0 569.5 C1257.5 573.4 1259.5 565.3 1270.3 563.1 C1280.8 560.9 1282.2 564.9 1291.7 560.6 C1303.6 555.2 1301.5 550.8 1313.0 543.8 C1322.8 537.8 1324.3 533.2 1334.3 534.7 C1345.7 536.3 1344.2 544.0 1355.7 550.0 C1365.5 555.1 1366.8 552.4 1377.0 556.9 C1388.1 561.8 1387.4 563.4 1398.3 568.8 C1408.7 573.8 1409.4 572.4 1419.7 577.7 C1430.8 583.4 1429.9 589.7 1441.0 590.8 C1451.3 591.7 1451.4 585.3 1462.3 581.6 C1472.7 578.1 1473.0 579.0 1483.7 576.4 C1494.3 573.8 1494.3 573.5 1505.0 571.2 C1515.6 569.0 1516.2 570.8 1526.3 567.3 C1537.5 563.5 1537.0 561.9 1547.7 556.7 C1558.3 551.4 1558.6 551.9 1569.0 546.3 C1579.9 540.3 1578.9 537.6 1590.3 533.4 C1600.2 529.8 1601.8 528.3 1611.7 530.7 C1623.1 533.5 1622.6 544.4 1633.0 543.8 C1644.0 543.2 1642.9 534.5 1654.3 528.2 C1664.2 522.8 1664.7 523.1 1675.7 520.3 C1686.0 517.7 1686.6 516.1 1697.0 517.4 C1708.0 518.7 1708.9 519.4 1718.3 525.5 C1730.3 533.3 1732.9 532.7 1739.7 545.0 C1754.2 571.5 1745.2 580.2 1761.0 603.1 C1766.5 611.1 1772.4 603.1 1782.3 606.8 C1793.7 611.1 1794.7 611.0 1803.7 619.2 C1816.0 630.4 1825.0 645.6 1825.0 645.6" stroke="#91c7ae" />
<path d="M289.0 538.1 C289.0 538.1 300.4 553.3 310.3 552.0 C321.7 550.4 319.7 535.5 331.7 532.2 C341.0 529.6 342.5 535.7 353.0 540.1 C363.8 544.6 365.1 543.1 374.3 550.0 C386.4 559.0 385.6 560.4 395.7 572.0 C407.0 585.0 403.8 590.5 417.0 599.2 C425.1 604.5 427.8 598.7 438.3 600.2 C449.1 601.7 450.9 607.8 459.7 605.1 C472.2 599.8 471.4 594.5 481.0 582.1 C492.8 566.9 492.1 566.3 502.3 550.0 C513.4 532.2 510.3 529.3 523.7 513.9 C531.7 504.6 534.9 508.0 545.0 500.6 C556.2 492.4 554.3 488.8 566.3 482.8 C575.7 478.1 577.2 481.6 587.7 479.1 C598.5 476.5 598.6 476.6 609.0 472.6 C620.0 468.4 620.6 462.7 630.3 462.7 C641.9 465.0 639.7 477.1 651.7 480.8 C661.0 483.7 664.7 471.5 673.0 475.8 C686.1 482.7 684.3 489.0 694.3 503.0 C705.6 518.7 702.0 525.6 715.7 535.2 C723.3 540.5 726.5 531.8 737.0 532.7 C747.8 533.6 748.0 534.9 758.3 538.9 C769.4 543.1 768.5 545.4 779.7 549.2 C789.9 552.7 790.3 551.5 801.0 553.4 C811.6 555.4 811.7 557.1 822.3 556.9 C833.0 556.7 834.1 550.0 843.7 552.7 C855.5 556.1 854.2 561.0 865.0 569.0 C875.6 576.9 875.0 577.9 886.3 584.6 C896.4 590.6 896.8 590.1 907.7 594.5 C918.1 598.7 918.2 598.5 929.0 601.9 C939.6 605.2 940.3 607.8 950.3 607.8 C961.6 606.1 961.6 602.4 971.7 595.2 C983.0 587.1 980.9 583.0 993.0 577.2 C1002.3 572.7 1007.4 581.3 1014.3 574.5 C1028.7 560.4 1023.7 554.1 1035.7 535.4 C1045.0 520.8 1044.1 518.5 1057.0 508.0 C1065.4 501.1 1068.2 499.2 1078.3 500.6 C1089.5 502.1 1088.2 509.5 1099.7 513.7 C1109.5 517.3 1110.3 515.8 1121.0 516.1 C1131.6 516.4 1132.3 517.9 1142.3 514.9 C1153.7 511.5 1152.9 503.6 1163.7 503.3 C1174.2 503.0 1174.8 507.7 1185.0 513.7 C1196.1 520.2 1194.7 523.2 1206.3 528.2 C1216.1 532.5 1216.9 531.6 1227.7 532.2 C1238.3 532.8 1238.4 531.7 1249.0 530.7 C1259.7 529.7 1260.2 531.3 1270.3 528.2 C1281.5 524.9 1280.4 520.3 1291.7 517.9 C1301.8 515.7 1302.8 516.6 1313.0 519.1 C1324.1 521.8 1323.4 524.4 1334.3 528.2 C1344.7 531.9 1345.3 530.3 1355.7 534.2 C1366.7 538.2 1366.5 538.8 1377.0 544.1 C1387.8 549.5 1387.7 549.9 1398.3 555.7 C1409.0 561.5 1408.4 563.5 1419.7 567.3 C1429.7 570.7 1431.1 572.4 1441.0 570.0 C1452.5 567.2 1450.8 560.8 1462.3 556.9 C1472.2 553.6 1473.0 556.5 1483.7 555.7 C1494.3 554.9 1495.0 556.8 1505.0 553.7 C1516.3 550.2 1516.3 549.2 1526.3 542.6 C1537.7 535.1 1535.7 530.3 1547.7 525.5 C1557.0 521.8 1558.7 527.4 1569.0 525.5 C1580.0 523.5 1580.2 522.7 1590.3 517.9 C1601.5 512.5 1600.4 510.2 1611.7 505.0 C1621.8 500.4 1622.1 500.0 1633.0 498.3 C1643.4 496.7 1643.7 497.5 1654.3 498.3 C1665.1 499.2 1665.9 504.3 1675.7 501.8 C1687.3 498.8 1685.5 490.0 1697.0 487.5 C1706.8 485.3 1707.6 490.6 1718.3 492.4 C1728.9 494.2 1729.3 492.3 1739.7 494.6 C1750.6 497.0 1754.2 493.8 1761.0 501.8 C1775.5 518.8 1769.3 524.9 1782.3 544.5 C1790.6 557.0 1791.5 562.3 1803.7 566.0 C1812.9 568.9 1825.0 557.6 1825.0 557.6" stroke="#749f83" />
<path d="M289.0 422.0 C289.0 422.0 298.7 438.5 310.3 453.4 C320.0 465.7 321.4 464.5 331.7 476.3 C342.7 489.1 340.1 492.8 353.0 502.5 C361.4 508.9 363.6 505.6 374.3 508.5 C385.0 511.3 387.8 507.2 395.7 513.9 C409.1 525.5 404.2 531.7 417.0 545.0 C425.5 553.9 426.9 553.5 438.3 558.4 C448.3 562.6 450.4 566.3 459.7 563.3 C471.7 559.5 477.7 558.0 481.0 544.8 C499.0 473.5 484.1 464.8 502.3 394.3 C505.4 382.4 516.3 390.0 523.7 380.0 C537.6 360.9 536.0 358.8 545.0 336.2 C557.3 305.4 552.0 302.6 566.3 273.2 C573.4 258.7 574.8 256.2 587.7 248.5 C596.1 247.7 598.3 247.7 609.0 247.7 C619.7 247.9 623.8 247.7 630.3 249.0 C645.2 264.7 637.5 274.3 651.7 293.0 C658.8 302.3 661.7 302.9 673.0 305.1 C683.0 307.0 685.8 297.0 694.3 301.1 C707.1 307.3 703.1 316.3 715.7 325.8 C724.4 332.5 726.3 329.9 737.0 333.5 C747.6 337.0 747.4 338.3 758.3 340.2 C768.8 341.9 771.1 335.9 779.7 340.7 C792.4 347.7 788.4 355.5 801.0 363.9 C809.8 369.7 815.0 362.0 822.3 369.1 C836.3 382.6 832.7 387.3 843.7 405.2 C854.1 422.1 854.9 421.6 865.0 438.8 C876.2 457.8 876.2 457.9 886.3 477.6 C897.5 499.3 895.3 500.6 907.7 521.6 C916.6 536.8 917.1 536.9 929.0 550.0 C938.4 560.3 939.3 567.6 950.3 568.3 C960.7 568.9 964.6 563.4 971.7 552.7 C986.0 531.0 979.5 526.3 993.0 503.5 C1000.8 490.3 1002.8 482.7 1014.3 480.8 C1024.1 479.1 1024.7 495.6 1035.7 496.4 C1046.0 497.1 1046.2 484.0 1057.0 483.8 C1067.6 483.5 1068.3 488.7 1078.3 495.4 C1089.6 502.9 1088.3 510.4 1099.7 512.2 C1109.6 513.7 1109.9 506.0 1121.0 502.0 C1131.3 498.3 1131.6 499.1 1142.3 496.8 C1152.9 494.6 1155.0 489.0 1163.7 492.9 C1176.3 498.6 1174.5 504.3 1185.0 516.1 C1195.9 528.3 1193.6 534.9 1206.3 540.8 C1214.9 544.8 1216.9 537.8 1227.7 535.9 C1238.2 534.1 1238.5 532.8 1249.0 533.4 C1259.8 534.1 1259.5 537.0 1270.3 538.6 C1280.9 540.2 1281.3 537.7 1291.7 539.9 C1302.6 542.1 1303.2 542.1 1313.0 547.5 C1324.5 553.8 1323.3 556.0 1334.3 563.3 C1344.6 570.2 1344.3 571.7 1355.7 575.9 C1365.6 579.6 1366.4 577.1 1377.0 579.1 C1387.7 581.2 1387.7 581.6 1398.3 584.1 C1409.0 586.6 1408.9 588.6 1419.7 589.3 C1430.2 589.3 1430.3 587.4 1441.0 586.8 C1451.6 586.2 1451.8 587.8 1462.3 586.8 C1473.1 585.8 1472.9 584.2 1483.7 582.9 C1494.3 581.6 1494.4 583.0 1505.0 581.6 C1515.8 580.2 1516.1 580.9 1526.3 577.4 C1537.5 573.6 1536.5 570.4 1547.7 567.0 C1557.8 564.0 1558.5 566.5 1569.0 564.6 C1579.8 562.6 1580.0 562.9 1590.3 559.4 C1601.3 555.7 1601.1 555.1 1611.7 550.2 C1622.5 545.3 1621.8 543.3 1633.0 539.9 C1643.1 536.7 1654.3 537.1 1654.3 537.1 M1718.3 537.4 C1718.3 537.4 1728.4 544.8 1739.7 549.2 C1749.8 553.2 1753.1 547.6 1761.0 554.2 C1774.5 565.5 1768.9 576.9 1782.3 585.1 C1790.2 589.3 1792.9 581.1 1803.7 580.1 C1814.2 579.2 1825.0 581.4 1825.0 581.4" stroke="#ca8622" />
<path d="M289.0 422.0 C289.0 422.0 299.9 425.0 310.3 429.1 C321.2 433.4 320.8 434.4 331.7 438.8 C342.1 443.0 343.7 440.2 353.0 446.2 C365.0 453.8 368.1 453.3 374.3 466.0 C389.4 496.8 379.8 503.8 395.7 533.2 C401.2 543.3 409.2 536.2 417.0 545.0 C430.5 560.4 425.9 577.1 438.3 581.6 C447.2 584.8 452.6 573.3 459.7 560.4 C473.9 534.3 469.7 531.7 481.0 503.5 C491.1 478.3 491.2 478.3 502.3 453.6 C512.5 431.1 513.5 431.6 523.7 409.1 C534.8 384.6 535.0 384.7 545.0 359.7 C556.3 331.5 550.6 323.0 566.3 302.8 C571.9 302.8 577.2 302.9 587.7 305.1 C598.5 307.3 598.1 309.9 609.0 311.5 C619.4 313.1 619.7 311.8 630.3 311.5 C641.0 311.2 642.8 306.2 651.7 310.3 C664.1 315.9 663.9 319.4 673.0 331.0 C685.2 346.6 684.2 347.5 694.3 364.6 C705.5 383.6 709.3 382.3 715.7 403.2 C730.7 452.7 721.2 478.6 737.0 505.5 C742.5 514.9 746.7 489.8 758.3 475.8 C768.0 464.2 768.3 464.2 779.7 454.3 C789.6 445.7 789.5 440.9 801.0 438.8 C810.9 436.9 813.4 440.0 822.3 446.4 C834.7 455.4 835.5 456.4 843.7 469.7 C856.9 491.2 853.3 493.4 865.0 516.1 C874.6 534.8 874.1 548.6 886.3 552.5 C895.4 555.3 895.1 534.7 907.7 529.5 C916.5 525.8 919.6 529.6 929.0 534.7 C940.9 541.2 940.6 554.5 950.3 552.7 C962.0 550.5 961.3 540.0 971.7 526.8 C982.6 512.8 985.9 514.4 993.0 498.3 C1007.3 465.9 998.0 454.1 1014.3 429.9 C1019.3 422.5 1025.9 430.4 1035.7 435.1 C1047.3 440.6 1045.3 447.1 1057.0 450.1 C1066.7 452.7 1068.4 444.1 1078.3 446.2 C1089.8 448.6 1090.2 451.2 1099.7 459.3 C1111.6 469.4 1108.3 474.8 1121.0 482.5 C1129.6 487.8 1131.8 485.8 1142.3 485.2 C1153.1 484.6 1152.9 480.7 1163.7 480.0 C1174.2 479.4 1178.4 475.5 1185.0 482.5 C1199.7 498.1 1193.4 505.5 1206.3 525.3 C1214.7 538.0 1215.3 542.9 1227.7 547.5 C1236.6 550.8 1238.1 542.7 1249.0 541.1 C1259.4 539.5 1259.7 541.1 1270.3 541.1 C1281.0 541.1 1281.1 540.1 1291.7 541.1 C1302.4 542.1 1303.1 541.1 1313.0 545.0 C1324.4 549.5 1322.9 554.0 1334.3 557.9 C1344.2 561.2 1345.0 559.6 1355.7 559.4 C1366.4 559.1 1367.4 554.0 1377.0 556.9 C1388.8 560.5 1386.6 567.1 1398.3 572.5 C1408.0 576.9 1411.4 570.4 1419.7 576.4 C1432.8 586.0 1429.5 601.9 1441.0 603.6 C1450.9 603.6 1450.6 585.3 1462.3 582.9 C1471.9 580.9 1474.7 597.7 1483.7 594.7 C1496.0 590.6 1492.0 577.1 1505.0 568.8 C1513.3 563.4 1516.0 569.6 1526.3 567.3 C1537.3 564.9 1536.8 562.7 1547.7 559.4 C1558.1 556.2 1558.7 557.9 1569.0 554.2 C1580.1 550.1 1579.4 548.5 1590.3 543.8 C1600.8 539.3 1601.2 540.4 1611.7 535.9 C1622.6 531.2 1621.9 529.6 1633.0 525.5 C1643.3 521.8 1643.9 519.4 1654.3 520.3 C1665.3 521.3 1665.3 529.9 1675.7 529.2 C1686.6 528.5 1686.4 517.1 1697.0 517.4 C1707.8 517.6 1706.8 526.8 1718.3 530.2 C1728.2 533.2 1729.1 529.0 1739.7 530.2 C1750.5 531.5 1751.2 530.8 1761.0 535.2 C1772.5 540.3 1772.9 540.8 1782.3 549.2 C1794.2 559.8 1793.4 560.9 1803.7 573.2 C1814.7 586.5 1825.0 600.4 1825.0 600.4" stroke="#bda29a" />
<path d="M289.0 422.0 C289.0 422.0 301.6 424.1 310.3 431.4 C323.0 441.9 320.8 444.6 331.7 457.6 C342.2 470.1 342.1 470.1 353.0 482.3 C363.5 494.0 363.3 494.3 374.3 505.5 C384.6 515.9 383.6 517.7 395.7 525.5 C405.0 531.6 406.4 529.3 417.0 533.2 C427.7 537.1 428.9 535.1 438.3 541.1 C450.2 548.7 450.0 562.3 459.7 560.4 C471.4 558.1 475.5 548.9 481.0 532.7 C496.9 485.7 490.4 483.0 502.3 433.8 C511.8 395.0 509.1 393.5 523.7 356.7 C530.5 339.5 533.3 340.4 545.0 325.8 C554.6 313.9 554.0 312.1 566.3 303.8 C575.3 297.8 577.1 301.0 587.7 297.4 C598.4 293.8 598.2 290.0 609.0 289.5 C619.5 289.5 630.3 295.4 630.3 295.4 M673.0 331.0 C673.0 331.0 683.4 354.4 694.3 377.5 C704.7 399.5 703.8 400.0 715.7 421.2 C725.1 438.1 724.1 448.1 737.0 453.6 C745.5 457.2 746.8 442.1 758.3 439.5 C768.2 437.3 768.9 443.5 779.7 444.0 C790.3 444.4 791.1 438.8 801.0 441.2 C812.5 444.0 811.4 448.4 822.3 454.3 C832.7 460.0 835.5 456.5 843.7 464.5 C856.8 477.2 854.0 480.3 865.0 495.6 C875.3 510.1 874.8 510.6 886.3 524.0 C896.1 535.3 898.3 533.4 907.7 545.0 C919.7 560.0 917.1 574.3 929.0 577.2 C938.4 579.4 944.6 569.0 950.3 555.2 C965.9 517.9 955.6 511.5 971.7 475.1 C976.9 463.2 983.6 468.1 993.0 458.5 C1005.0 446.3 1001.5 442.0 1014.3 431.4 C1022.8 424.3 1024.7 424.7 1035.7 423.2 C1046.0 421.8 1046.6 423.2 1057.0 425.7 C1068.0 428.3 1068.8 427.6 1078.3 433.3 C1090.1 440.4 1090.3 441.1 1099.7 451.4 C1111.6 464.5 1107.8 469.6 1121.0 480.0 C1129.1 486.5 1131.5 484.4 1142.3 485.2 C1152.9 486.0 1153.3 481.9 1163.7 483.3 C1174.6 484.7 1176.6 483.8 1185.0 490.7 C1197.9 501.1 1193.9 506.2 1206.3 517.9 C1215.3 526.2 1217.5 523.6 1227.7 530.7 C1238.8 538.4 1237.1 542.4 1249.0 547.5 C1258.4 551.5 1259.7 548.3 1270.3 549.0 C1281.0 549.7 1281.1 548.9 1291.7 550.2 C1302.4 551.5 1302.7 551.0 1313.0 554.2 C1324.0 557.6 1323.3 560.0 1334.3 563.3 C1344.6 566.4 1344.9 565.7 1355.7 567.0 C1366.3 568.4 1368.8 563.2 1377.0 568.8 C1390.2 577.7 1385.3 586.1 1398.3 596.0 C1406.6 602.2 1408.9 600.8 1419.7 601.1 C1430.3 601.5 1431.1 595.1 1441.0 597.2 C1452.4 599.6 1451.6 603.8 1462.3 610.0 C1472.9 616.2 1472.5 617.1 1483.7 621.9 C1493.9 626.3 1496.1 628.6 1505.0 628.6 C1517.4 623.9 1516.7 618.0 1526.3 605.8 C1538.0 591.1 1534.0 584.2 1547.7 574.7 C1555.4 569.3 1559.9 580.0 1569.0 576.2 C1581.3 571.0 1580.1 566.9 1590.3 556.7 C1601.5 545.5 1598.9 540.6 1611.7 533.4 C1620.3 528.6 1622.8 530.5 1633.0 532.7 C1644.2 535.1 1643.3 541.3 1654.3 542.6 C1664.6 543.8 1665.8 535.5 1675.7 537.6 C1687.2 540.1 1685.7 550.1 1697.0 551.7 C1707.1 553.1 1707.5 544.2 1718.3 543.6 C1728.8 543.0 1729.1 549.6 1739.7 549.2 C1750.4 548.9 1750.0 543.9 1761.0 542.1 C1771.4 540.3 1774.9 536.2 1782.3 542.1 C1796.2 552.9 1790.2 567.9 1803.7 575.4 C1811.6 579.9 1825.0 566.0 1825.0 566.0" stroke="#6e7074" />
<path d="M289.0 446.2 C289.0 446.2 299.5 437.9 310.3 437.3 C320.8 436.7 320.8 442.7 331.7 443.7 C342.1 444.7 344.4 437.0 353.0 441.2 C365.8 447.6 362.3 454.8 374.3 465.0 C383.6 472.8 387.7 468.3 395.7 477.1 C409.0 491.7 408.7 493.4 417.0 511.9 C430.0 540.8 424.1 559.7 438.3 572.0 C445.4 578.1 449.9 561.1 459.7 548.8 C471.3 534.0 474.8 535.3 481.0 517.9 C496.1 475.4 489.7 472.8 502.3 428.9 C511.0 398.6 510.7 398.1 523.7 369.6 C532.0 351.2 533.2 351.4 545.0 335.0 C554.5 321.8 554.2 320.8 566.3 310.3 C575.5 302.3 577.6 304.9 587.7 297.9 C598.9 290.1 599.8 280.6 609.0 280.6 C621.2 284.1 620.7 294.8 630.3 310.3 C642.0 329.0 638.0 332.5 651.7 349.1 C659.3 358.4 664.4 365.3 673.0 361.9 C685.7 356.9 682.7 334.3 694.3 332.3 C704.1 330.5 704.2 344.2 715.7 354.2 C725.5 362.9 726.3 369.4 737.0 369.6 C747.6 369.7 747.9 354.3 758.3 354.7 C769.2 355.2 767.8 367.5 779.7 371.5 C789.1 374.7 791.1 366.7 801.0 369.1 C812.5 371.9 813.8 373.2 822.3 381.9 C835.2 395.1 836.3 395.8 843.7 412.8 C857.6 444.8 852.6 447.1 865.0 480.0 C874.0 503.9 871.6 507.6 886.3 526.5 C892.9 534.9 898.3 537.2 907.7 534.7 C919.6 531.5 921.4 510.1 929.0 515.1 C942.8 524.3 936.4 553.4 950.3 563.1 C957.8 568.3 963.1 555.7 971.7 544.8 C984.4 528.5 983.7 527.5 993.0 508.7 C1005.1 484.3 999.0 477.4 1014.3 458.5 C1020.4 451.1 1025.1 455.3 1035.7 456.1 C1046.5 456.9 1046.2 460.6 1057.0 461.8 C1067.5 462.8 1069.3 456.6 1078.3 460.5 C1090.6 465.8 1087.7 472.4 1099.7 480.0 C1109.0 486.0 1110.0 486.1 1121.0 487.7 C1131.4 489.3 1131.8 488.1 1142.3 486.5 C1153.1 484.8 1153.1 481.0 1163.7 481.3 C1174.4 481.6 1177.7 480.2 1185.0 487.7 C1199.1 502.2 1192.4 510.3 1206.3 525.3 C1213.7 533.2 1216.8 532.7 1227.7 533.4 C1238.1 534.2 1238.4 527.9 1249.0 528.2 C1259.7 528.5 1259.4 532.7 1270.3 534.7 C1280.8 536.5 1281.1 534.6 1291.7 535.9 C1302.4 537.2 1302.9 536.2 1313.0 539.9 C1324.3 544.0 1324.2 544.8 1334.3 551.5 C1345.5 558.8 1343.8 564.1 1355.7 567.8 C1365.2 570.7 1366.7 563.4 1377.0 564.8 C1388.0 566.3 1387.3 571.1 1398.3 573.5 C1408.6 575.7 1409.2 572.6 1419.7 574.0 C1430.5 575.4 1430.9 575.2 1441.0 579.1 C1452.2 583.6 1451.5 590.5 1462.3 590.8 C1472.9 591.1 1472.5 583.9 1483.7 580.4 C1493.8 577.1 1494.4 579.2 1505.0 577.2 C1515.7 575.1 1516.2 576.2 1526.3 572.2 C1537.6 567.9 1536.4 564.4 1547.7 560.6 C1557.7 557.2 1558.3 558.9 1569.0 557.9 C1579.6 556.9 1580.0 558.8 1590.3 556.7 C1601.3 554.4 1603.4 556.0 1611.7 549.0 C1624.7 537.9 1619.9 526.8 1633.0 520.3 C1641.3 516.2 1643.4 526.1 1654.3 527.7 C1664.7 529.3 1665.7 529.8 1675.7 526.8 C1687.0 523.3 1686.0 515.8 1697.0 514.9 C1707.3 514.1 1708.5 517.6 1718.3 523.3 C1729.9 530.0 1730.7 529.9 1739.7 539.9 C1752.1 553.7 1749.2 556.3 1761.0 570.7 C1770.5 582.4 1772.3 580.8 1782.3 592.0 C1793.6 604.5 1790.6 609.8 1803.7 618.2 C1811.9 619.4 1825.0 619.4 1825.0 619.4" stroke="#546570" />
<path d="M289.0 477.8 C289.0 477.8 300.4 473.4 310.3 475.8 C321.7 478.6 321.4 481.4 331.7 488.2 C342.7 495.5 342.0 496.6 353.0 504.0 C363.4 511.0 364.0 510.1 374.3 517.1 C385.3 524.6 384.9 525.2 395.7 533.2 C406.3 541.0 407.5 539.7 417.0 548.8 C428.9 560.1 425.4 565.7 438.3 574.0 C446.7 579.3 450.5 579.5 459.7 575.9 C471.8 571.2 470.5 566.9 481.0 557.4 C491.9 547.5 495.1 531.6 502.3 537.1 C516.4 548.0 523.7 590.3 523.7 590.3 M566.3 420.7 C566.3 420.7 575.8 404.5 587.7 390.3 C597.2 379.0 597.8 370.6 609.0 369.6 C619.2 369.6 618.4 381.3 630.3 386.4 C639.7 390.4 646.2 380.2 651.7 387.9 C667.5 410.1 658.0 420.3 673.0 446.2 C679.3 457.1 683.8 453.6 694.3 461.5 C705.2 469.7 703.8 472.9 715.7 478.3 C725.1 482.6 727.1 483.1 737.0 480.8 C748.4 478.1 747.0 470.7 758.3 468.4 C768.3 466.5 769.2 469.5 779.7 472.4 C790.6 475.4 791.1 474.7 801.0 480.0 C812.5 486.3 811.4 488.3 822.3 495.6 C832.7 502.5 833.6 501.2 843.7 508.5 C854.9 516.6 853.7 518.3 865.0 526.5 C875.1 533.8 875.7 532.8 886.3 539.4 C897.1 545.9 896.4 547.2 907.7 552.7 C917.8 557.7 920.2 563.8 929.0 560.4 C941.6 555.4 937.9 540.4 950.3 535.9 C959.2 532.7 960.7 544.0 971.7 545.0 C982.0 546.1 982.3 542.2 993.0 540.1 C1003.6 538.0 1004.0 535.3 1014.3 536.6 C1025.4 538.1 1024.6 543.0 1035.7 545.8 C1045.9 548.4 1046.7 549.1 1057.0 547.5 C1068.0 545.9 1068.2 538.2 1078.3 539.4 C1089.5 540.7 1088.3 547.6 1099.7 552.5 C1109.6 556.7 1110.5 558.1 1121.0 557.4 C1131.9 556.7 1131.9 554.1 1142.3 549.7 C1153.2 545.1 1153.0 539.4 1163.7 539.4 C1174.3 539.4 1176.4 542.0 1185.0 549.7 C1197.7 561.1 1193.6 566.1 1206.3 577.4 C1215.0 585.1 1216.5 584.1 1227.7 587.8 C1237.9 591.2 1238.7 593.0 1249.0 591.8 C1260.0 590.4 1259.2 584.7 1270.3 582.6 C1280.6 580.7 1281.3 581.6 1291.7 583.8 C1302.7 586.2 1302.0 589.4 1313.0 591.8 C1323.3 594.0 1323.9 591.1 1334.3 593.0 C1345.2 594.9 1345.2 595.5 1355.7 599.4 C1366.6 603.5 1365.9 606.0 1377.0 608.8 C1387.2 611.3 1388.0 607.8 1398.3 610.0 C1409.3 612.4 1409.1 613.7 1419.7 617.9 C1430.4 622.3 1429.9 624.7 1441.0 627.1 C1451.2 627.1 1451.8 627.1 1462.3 627.1 C1473.2 625.8 1472.9 623.7 1483.7 621.9 C1494.2 620.2 1495.3 623.8 1505.0 620.2 C1516.6 615.8 1515.5 612.7 1526.3 605.8 C1536.8 599.2 1536.3 597.8 1547.7 593.0 C1557.7 588.8 1558.3 590.4 1569.0 587.8 C1579.7 585.2 1579.7 585.2 1590.3 582.6 C1601.0 580.0 1601.3 580.9 1611.7 577.4 C1622.6 573.7 1622.2 572.6 1633.0 568.3 C1643.6 564.1 1643.6 560.7 1654.3 560.4 C1664.9 560.1 1665.2 567.7 1675.7 567.0 C1686.6 566.3 1687.4 555.5 1697.0 557.6 C1708.8 560.3 1706.8 574.7 1718.3 576.7 C1728.2 578.3 1728.5 566.4 1739.7 564.8 C1749.8 563.4 1750.2 568.4 1761.0 570.7 C1771.5 573.1 1771.6 573.0 1782.3 574.2 C1792.9 575.4 1793.4 573.1 1803.7 575.4 C1814.7 577.9 1825.0 583.8 1825.0 583.8" stroke="#c4ccd3" />
<path d="M289.0 476.3 C289.0 476.3 298.9 464.1 310.3 453.4 C320.3 444.0 321.9 434.7 331.7 436.3 C343.2 438.2 340.4 451.3 353.0 460.5 C361.8 467.0 366.3 460.6 374.3 467.7 C387.6 479.5 387.7 481.6 395.7 498.3 C409.0 526.1 403.9 528.7 417.0 556.7 C425.3 574.3 425.8 585.0 438.3 589.5 C447.1 589.5 452.8 583.7 459.7 572.2 C474.2 547.9 469.7 544.8 481.0 517.9 C491.0 494.1 492.7 494.8 502.3 470.9 C514.1 441.7 513.0 441.2 523.7 411.6 C534.3 381.9 531.2 380.2 545.0 352.3 C552.6 337.0 554.6 337.7 566.3 325.1 C576.0 314.7 575.9 313.9 587.7 306.3 C597.2 300.1 598.1 298.3 609.0 297.4 C619.4 297.4 619.5 300.9 630.3 302.8 C640.9 304.7 642.1 301.1 651.7 305.1 C663.4 310.0 665.1 310.5 673.0 320.6 C686.4 337.8 682.1 341.2 694.3 359.7 C703.5 373.5 704.7 372.7 715.7 385.1 C726.1 397.0 724.8 398.8 737.0 408.4 C746.2 415.6 751.7 409.7 758.3 418.8 C773.1 439.1 764.5 450.4 779.7 467.2 C785.8 474.0 790.3 466.3 801.0 466.0 C811.7 465.6 811.8 464.7 822.3 466.0 C833.1 467.2 834.5 465.6 843.7 470.9 C855.8 477.9 854.2 480.8 865.0 490.4 C875.5 499.7 877.8 497.8 886.3 508.7 C899.1 525.1 895.0 540.1 907.7 545.0 C916.3 548.5 919.3 523.8 929.0 525.5 C940.6 527.6 940.7 554.7 950.3 552.7 C962.0 550.3 957.8 530.9 971.7 516.6 C979.2 508.9 985.4 516.4 993.0 508.7 C1006.8 494.8 1000.5 487.2 1014.3 473.4 C1021.9 465.8 1024.7 468.6 1035.7 466.0 C1046.1 463.4 1046.3 464.0 1057.0 463.0 C1067.6 461.9 1068.8 458.6 1078.3 461.8 C1090.1 465.7 1088.0 471.7 1099.7 477.3 C1109.4 482.0 1110.3 480.2 1121.0 482.5 C1131.6 484.8 1131.7 486.5 1142.3 486.5 C1153.0 486.5 1153.1 482.2 1163.7 482.5 C1174.4 482.8 1177.4 480.8 1185.0 487.7 C1198.8 500.3 1192.4 510.4 1206.3 521.6 C1213.8 527.5 1217.0 522.1 1227.7 521.8 C1238.3 521.5 1238.4 519.7 1249.0 520.3 C1259.7 521.0 1259.7 524.3 1270.3 524.3 C1281.0 524.3 1281.4 519.1 1291.7 520.3 C1302.7 521.7 1302.7 524.2 1313.0 529.5 C1324.0 535.2 1323.4 536.4 1334.3 542.3 C1344.7 547.9 1345.0 547.5 1355.7 552.5 C1366.3 557.4 1366.3 557.4 1377.0 562.1 C1387.6 566.8 1387.6 566.9 1398.3 571.2 C1408.9 575.5 1408.7 576.5 1419.7 579.1 C1430.0 581.7 1430.5 582.3 1441.0 581.6 C1451.8 580.9 1451.5 577.7 1462.3 576.4 C1472.8 575.2 1473.0 577.0 1483.7 576.4 C1494.4 575.9 1494.5 576.2 1505.0 574.2 C1515.8 572.1 1516.4 572.9 1526.3 568.3 C1537.8 562.9 1536.1 559.1 1547.7 554.2 C1557.5 550.0 1558.3 551.9 1569.0 550.2 C1579.6 548.6 1580.1 550.3 1590.3 547.5 C1601.4 544.5 1601.0 543.1 1611.7 538.6 C1622.4 534.1 1622.1 533.4 1633.0 529.5 C1643.4 525.7 1643.5 525.3 1654.3 523.0 C1664.8 520.9 1665.0 521.4 1675.7 520.8 C1686.3 520.3 1686.3 520.8 1697.0 520.8 C1707.7 520.8 1707.9 522.3 1718.3 520.8 C1729.2 519.3 1729.4 513.8 1739.7 514.9 C1750.7 516.1 1751.0 519.1 1761.0 525.5 C1772.3 532.7 1771.7 533.8 1782.3 542.1 C1793.0 550.4 1791.9 552.6 1803.7 558.9 C1813.2 564.0 1825.0 564.8 1825.0 564.8" stroke="#c23531" />
</g>
<line x1="535.5" x2="560.5" y1="799.7" y2="799.7" stroke="#c23531" stroke-width="1.7"/>
<circle cx="548.0" cy="799.7" r="5.7" fill="#fff" stroke="#c23531" stroke-width="1.6"/>
<text x="565.5" y="803" font-size="12" fill="#333" textLength="36" lengthAdjust="spacing">三树镇</text>
<line x1="611.5" x2="636.5" y1="799.7" y2="799.7" stroke="#2f4554" stroke-width="1.7"/>
<circle cx="624.0" cy="799.7" r="5.7" fill="#fff" stroke="#2f4554" stroke-width="1.6"/>
<text x="641.5" y="803" font-size="12" fill="#333" textLength="48" lengthAdjust="spacing">南陈集镇</text>
<line x1="699.5" x2="724.5" y1="799.7" y2="799.7" stroke="#61a0a8" stroke-width="1.7"/>
<circle cx="712.0" cy="799.7" r="5.7" fill="#fff" stroke="#61a0a8" stroke-width="1.6"/>
<text x="729.5" y="803" font-size="12" fill="#333" textLength="48" lengthAdjust="spacing">刘老庄镇</text>
<line x1="787.5" x2="812.5" y1="799.7" y2="799.7" stroke="#d48265" stroke-width="1.7"/>
<circle cx="800.0" cy="799.7" r="5.7" fill="#fff" stroke="#d48265" stroke-width="1.6"/>
<text x="817.5" y="803" font-size="12" fill="#333" textLength="36" lengthAdjust="spacing">丁集镇</text>
<line x1="863.5" x2="888.5" y1="799.7" y2="799.7" stroke="#91c7ae" stroke-width="1.7"/>
<circle cx="876.0" cy="799.7" r="5.7" fill="#fff" stroke="#91c7ae" stroke-width="1.6"/>
<text x="893.5" y="803" font-size="12" fill="#333" textLength="36" lengthAdjust="spacing">徐溜镇</text>
<line x1="939.5" x2="964.5" y1="799.7" y2="799.7" stroke="#749f83" stroke-width="1.7"/>
<circle cx="952.0" cy="799.7" r="5.7" fill="#fff" stroke="#749f83" stroke-width="1.6"/>
<text x="969.5" y="803" font-size="12" fill="#333" textLength="36" lengthAdjust="spacing">渔沟镇</text>
<line x1="1015.5" x2="1040.5" y1="799.7" y2="799.7" stroke="#ca8622" stroke-width="1.7"/>
<circle cx="1028.0" cy="799.7" r="5.7" fill="#fff" stroke="#ca8622" stroke-width="1.6"/>
<text x="1045.5" y="803" font-size="12" fill="#333" textLength="36" lengthAdjust="spacing">淮高镇</text>
<line x1="1091.5" x2="1116.5" y1="799.7" y2="799.7" stroke="#bda29a" stroke-width="1.7"/>
<circle cx="1104.0" cy="799.7" r="5.7" fill="#fff" stroke="#bda29a" stroke-width="1.6"/>
<text x="1121.5" y="803" font-size="12" fill="#333" textLength="36" lengthAdjust="spacing">马头镇</text>
<line x1="1167.5" x2="1192.5" y1="799.7" y2="799.7" stroke="#6e7074" stroke-width="1.7"/>
<circle cx="1180.0" cy="799.7" r="5.7" fill="#fff" stroke="#6e7074" stroke-width="1.6"/>
<text x="1197.5" y="803" font-size="12" fill="#333" textLength="48" lengthAdjust="spacing">高家堰镇</text>
<line x1="1255.5" x2="1280.5" y1="799.7" y2="799.7" stroke="#546570" stroke-width="1.7"/>
<circle cx="1268.0" cy="799.7" r="5.7" fill="#fff" stroke="#546570" stroke-width="1.6"/>
<text x="1285.5" y="803" font-size="12" fill="#333" textLength="60" lengthAdjust="spacing">古清口街道</text>
<line x1="1355.5" x2="1380.5" y1="799.7" y2="799.7" stroke="#c4ccd3" stroke-width="1.7"/>
<circle cx="1368.0" cy="799.7" r="5.7" fill="#fff" stroke="#c4ccd3" stroke-width="1.6"/>
<text x="1385.5" y="803" font-size="12" fill="#333" textLength="60" lengthAdjust="spacing">王家营街道</text>
<line x1="1455.5" x2="1480.5" y1="799.7" y2="799.7" stroke="#c23531" stroke-width="1.7"/>
<circle cx="1468.0" cy="799.7" r="5.7" fill="#fff" stroke="#c23531" stroke-width="1.6"/>
<text x="1485.5" y="803" font-size="12" fill="#333" textLength="60" lengthAdjust="spacing">新渡口街道</text>
</svg>

<!-- scroll widget -->
<svg class="abs" style="left:1902px;top:395px" width="18" height="90">
<rect x="3" y="2" width="12" height="86" rx="6" fill="#666" stroke="#eee" stroke-width="1"/>
<g stroke="#2fd45e" stroke-width="1"><line x1="4" x2="13" y1="50.5" y2="50.5"/><line x1="4" x2="13" y1="53.5" y2="53.5"/><line x1="4" x2="13" y1="56.5" y2="56.5"/><line x1="4" x2="13" y1="59.5" y2="59.5"/><line x1="4" x2="13" y1="62.5" y2="62.5"/><line x1="4" x2="13" y1="65.5" y2="65.5"/><line x1="4" x2="13" y1="68.5" y2="68.5"/><line x1="4" x2="13" y1="71.5" y2="71.5"/><line x1="4" x2="13" y1="74.5" y2="74.5"/><line x1="4" x2="13" y1="77.5" y2="77.5"/><line x1="4" x2="13" y1="80.5" y2="80.5"/><line x1="5" x2="12" y1="83.5" y2="83.5"/></g>
</svg>
</body></html>
